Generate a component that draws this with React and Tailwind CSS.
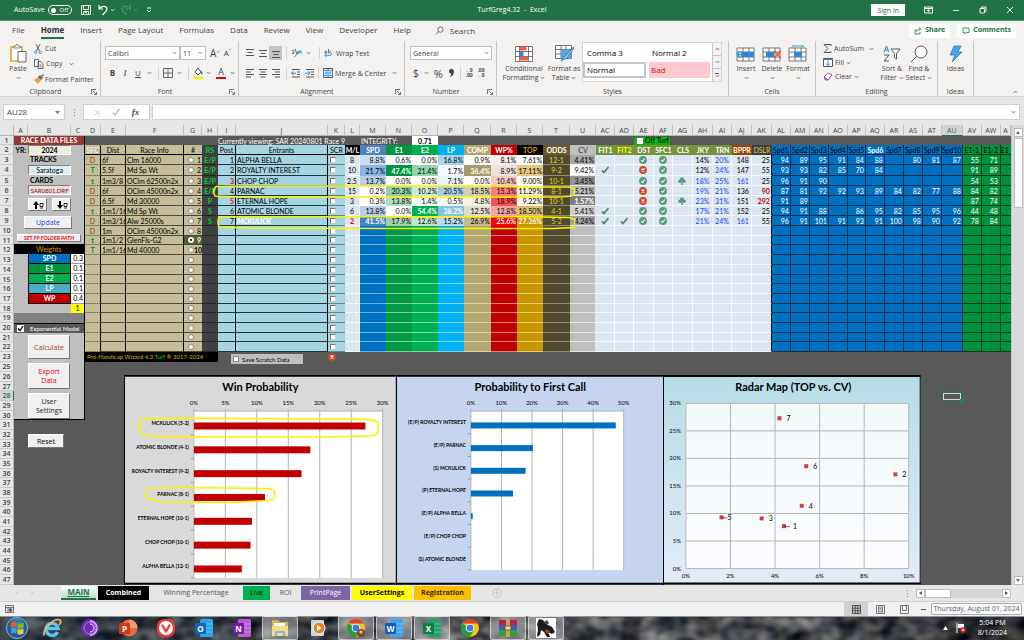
import { useState } from 'react';
import { clsx } from 'clsx';

const MENU = ['File', 'Home', 'Insert', 'Page Layout', 'Formulas', 'Data', 'Review', 'View', 'Developer', 'Help'];

// letter, width, title, header style, empty cell style
const GREEN_HEAD = 'bg-[#76933c] text-white font-bold text-center';
const PALE = 'bg-[#dce6f1] border-b border-r border-[#f6f9fc]';
const BLUE = 'bg-[#0070c0] border-b border-r border-[#0b2c48]';
const GREEN = 'bg-[#00923f] border-b border-r border-[#0a3a1c]';
const BLUE_HEAD = 'bg-[#0070c0] text-black text-center border-r border-b border-[#0b2c48]';

const COLUMNS = [
  { id: 'D', w: 16, title: 'SFC', head: 'bg-[#c4bd97] text-[#eeece1] font-bold text-center border-r border-b border-black', body: 'bg-[#c4bd97] border-b border-b-[#8a8468] border-r border-r-black' },
  { id: 'E', w: 25, title: 'Dist', head: 'bg-[#c4bd97] text-center border-r border-b border-black', body: 'bg-[#c4bd97] border-b border-b-[#4d4a3a] border-r border-r-black' },
  { id: 'F', w: 58, title: 'Race Info', head: 'bg-[#c4bd97] text-center border-r border-b border-black', body: 'bg-[#c4bd97] border-b border-b-[#4d4a3a] border-r border-r-black' },
  { id: 'G', w: 18, title: '#', head: 'bg-[#c4bd97] text-center border-b border-black', body: 'bg-[#c4bd97] border-b border-b-[#4d4a3a]' },
  { id: 'H', w: 16, title: 'RS', head: 'bg-[#404040] text-[#00d232] font-bold text-center', body: 'bg-[#404040] border-b border-[#262626]' },
  { id: 'I', w: 18, title: 'Post', head: 'bg-[#a5d5e2] text-center border-r border-b border-black', body: 'bg-[#a5d5e2] border-b border-b-[#1e3338] border-r border-r-black' },
  { id: 'J', w: 92, title: 'Entrants', head: 'bg-[#a5d5e2] text-center border-r border-b border-black', body: 'bg-[#a5d5e2] border-b border-b-[#1e3338] border-r border-r-black' },
  { id: 'K', w: 17, title: 'SCR', head: 'bg-[#a5d5e2] text-center border-b border-black', body: 'bg-[#a5d5e2] border-b border-b-[#5d8791]' },
  { id: 'L', w: 15, title: 'M/L', head: 'bg-black text-white font-bold text-center', body: PALE },
  { id: 'M', w: 26, title: 'SPD', head: 'bg-[#4f81bd] text-white font-bold text-center', body: 'bg-[#0070c0] border-b border-[#6fb0e0]' },
  { id: 'N', w: 26, title: 'E1', head: 'bg-[#00963f] text-white font-bold text-center', body: 'bg-[#009a46] border-b border-[#7fcb9f]' },
  { id: 'O', w: 26, title: 'E2', head: 'bg-[#00b050] text-white font-bold text-center', body: 'bg-[#00b050] border-b border-[#80d7a7]' },
  { id: 'P', w: 26, title: 'LP', head: 'bg-[#00b0f0] text-white font-bold text-center', body: 'bg-[#00b0f0] border-b border-[#80d7f7]' },
  { id: 'Q', w: 27, title: 'COMP', head: 'bg-[#b2a46c] text-white font-bold text-center', body: 'bg-[#b5a970] border-b border-[#d8d2b6]' },
  { id: 'R', w: 26, title: 'WP%', head: 'bg-[#c00000] text-white font-bold text-center', body: 'bg-[#c00000] border-b border-[#df8080]' },
  { id: 'S', w: 26, title: 'TOP', head: 'bg-black text-[#d99e12] font-bold text-center', body: 'bg-[#c89800] border-b border-[#e3cb80]' },
  { id: 'T', w: 27, title: 'ODDS', head: 'bg-[#6b5a2b] text-white font-bold text-center', body: 'bg-[#4f4a2e] border-b border-[#8d8a74]' },
  { id: 'U', w: 26, title: 'CV', head: 'bg-[#bfbfbf] text-[#333] text-center', body: 'bg-[#bfbfbf] border-b border-r border-[#e6e6e6]' },
  { id: 'AC', w: 19, title: 'FIT1', head: GREEN_HEAD, body: PALE },
  { id: 'AD', w: 19, title: 'FIT2', head: 'bg-[#76933c] text-[#ffff00] font-bold text-center', body: PALE },
  { id: 'AE', w: 20, title: 'DST', head: GREEN_HEAD, body: PALE },
  { id: 'AF', w: 19, title: 'SFC1', head: GREEN_HEAD, body: PALE },
  { id: 'AG', w: 20, title: 'CLS', head: GREEN_HEAD, body: PALE },
  { id: 'AH', w: 20, title: 'JKY', head: GREEN_HEAD, body: PALE },
  { id: 'AI', w: 19, title: 'TRN', head: GREEN_HEAD, body: PALE },
  { id: 'AJ', w: 20, title: 'BPPR', head: 'bg-[#974706] text-white font-bold text-center', body: PALE },
  { id: 'AK', w: 20, title: 'DSLR', head: 'bg-[#404040] text-[#d8cf3a] text-center', body: 'bg-[#dce6f1] border-b border-b-[#f6f9fc] border-r border-r-black' },
  { id: 'AL', w: 19, title: 'Spd1', head: BLUE_HEAD, body: BLUE },
  { id: 'AM', w: 19, title: 'Spd2', head: BLUE_HEAD, body: BLUE },
  { id: 'AN', w: 19, title: 'Spd3', head: BLUE_HEAD, body: BLUE },
  { id: 'AO', w: 19, title: 'Spd4', head: BLUE_HEAD, body: BLUE },
  { id: 'AP', w: 18, title: 'Spd5', head: BLUE_HEAD, body: BLUE },
  { id: 'AQ', w: 19, title: 'Spd6', head: 'bg-[#0070c0] text-white font-bold text-center border-b border-[#0b2c48]', body: BLUE },
  { id: 'AR', w: 19, title: 'Spd7', head: BLUE_HEAD, body: BLUE },
  { id: 'AS', w: 19, title: 'Spd8', head: BLUE_HEAD, body: BLUE },
  { id: 'AT', w: 19, title: 'Spd9', head: BLUE_HEAD, body: BLUE },
  { id: 'AU', w: 21, title: 'Spd10', head: BLUE_HEAD, body: BLUE },
  { id: 'AV', w: 19, title: 'E1-1', head: 'bg-[#00923f] text-black text-center border-r border-b border-[#0a3a1c]', body: GREEN },
  { id: 'AW', w: 19, title: 'E1-2', head: 'bg-[#00923f] text-black text-center border-r border-b border-[#0a3a1c]', body: GREEN },
  { id: 'AX', w: 10, title: 'E1', head: 'bg-[#00923f] text-black border-b border-[#0a3a1c]', body: 'bg-[#00923f] border-b border-[#0a3a1c]' },
];

const RACES = [
  ['D', '6f', 'Clm 16000'],
  ['T', '5.5f', 'Md Sp Wt'],
  ['t', '1m3/8', 'OClm 62500n2x'],
  ['D', '6f', 'OClm 45000n2x'],
  ['D', '6.5f', 'Md 30000'],
  ['t', '1m1/16', 'Md Sp Wt'],
  ['D', '1m3/16', 'Alw 25000s'],
  ['D', '1m', 'OClm 45000n2x'],
  ['t', '1m1/2', 'GlenFls-G2'],
  ['T', '1m1/16', 'Md 40000'],
];

const STRONG = 'text-white font-bold';

const HORSES = [
  {
    style: 'E/P', name: 'ALPHA BELLA', ml: '8', odds: '12-1',
    heat: [['8.8%', 'bg-[#d0def2]'], ['0.6%', 'bg-white'], ['0.0%', 'bg-white'], ['16.8%', 'bg-[#a8d5ea]'], ['0.9%', 'bg-[#fbfaf7]'], ['8.1%', 'bg-[#f3ecea]'], ['7.61%', 'bg-white']],
    cv: ['4.41%', 'bg-[#a6a6a6]'], fit: [0, 0], dst: 1, cls: 0, jky: '14%', trn: '20%', bppr: '148', dslr: '25',
    spd: [94, 89, 95, 91, 84, 88, '', 80, 81, 87], e1: [55, 71],
  },
  {
    style: 'E/P', name: 'ROYALTY INTEREST', ml: '10', odds: '9-2',
    heat: [['21.7%', 'bg-[#8db4e2]'], ['47.4%', `bg-[#009640] ${STRONG}`], ['21.4%', 'bg-[#93d5b0]'], ['1.7%', 'bg-[#f4fafd]'], ['36.4%', `bg-[#a89b6b] ${STRONG}`], ['8.9%', 'bg-[#f0dfdc]'], ['17.11%', 'bg-[#e3c983]']],
    cv: ['9.42%', 'bg-white'], fit: [1, 0], dst: 0, cls: 0, jky: '12%', trn: '24%', bppr: '147', dslr: '55',
    spd: [93, 93, 82, 85, 70, 84, '', '', '', ''], e1: [91, 89],
  },
  {
    style: 'E/P', name: 'CHOP CHOP', ml: '2.5', odds: '10-1', hot: true,
    heat: [['13.7%', 'bg-[#b8cdeb]'], ['0.0%', 'bg-white'], ['0.0%', 'bg-white'], ['7.1%', 'bg-[#e8f3fb]'], ['0.0%', 'bg-white'], ['10.4%', 'bg-[#f7c7c4]'], ['9.00%', 'bg-[#fdfaf0]']],
    cv: ['3.45%', 'bg-[#949494]'], fit: [0, 0], dst: 1, cls: 1, jky: '18%', trn: '25%', bppr: '161', dslr: '25',
    spd: [96, 91, 90, '', '', '', '', '', '', ''], e1: [54, 53],
  },
  {
    style: 'E/P', name: 'PARNAC', ml: '15', odds: '8-1',
    heat: [['0.2%', 'bg-white'], ['20.3%', 'bg-[#8fd0a9]'], ['10.2%', 'bg-[#c8ebd8]'], ['20.5%', 'bg-[#a9cfe6]'], ['18.5%', 'bg-[#d5cdb4]'], ['15.3%', 'bg-[#fa7d7a]'], ['11.29%', 'bg-[#f8efd8]']],
    cv: ['5.21%', 'bg-[#b8b8b8]'], fit: [0, 0], dst: 0, cls: 0, jky: '19%', trn: '21%', bppr: '136', dslr: '90',
    spd: [87, 81, 92, 92, 93, 89, 84, 82, 77, 88], e1: [84, 82],
  },
  {
    style: 'P', name: 'ETERNAL HOPE', ml: '3', odds: '10-1', hot: true,
    heat: [['0.3%', 'bg-white'], ['13.8%', 'bg-[#b0dec3]'], ['1.4%', 'bg-[#f6fcf9]'], ['0.5%', 'bg-white'], ['4.8%', 'bg-[#f3f1e9]'], ['18.9%', 'bg-[#f55550]'], ['9.22%', 'bg-[#fcf8ec]']],
    cv: ['1.57%', `bg-[#7f7f7f] ${STRONG}`], fit: [0, 0], dst: 0, cls: 1, jky: '23%', trn: '31%', bppr: '151', dslr: '292',
    spd: [91, 89, '', '', '', '', '', '', '', ''], e1: [87, 74],
  },
  {
    style: 'S', name: 'ATOMIC BLONDE', ml: '6', odds: '4-1',
    heat: [['13.8%', 'bg-[#b8cdeb]'], ['0.0%', 'bg-white'], ['54.4%', `bg-[#00b050] ${STRONG}`], ['38.2%', `bg-[#82c4e2] ${STRONG}`], ['12.5%', 'bg-[#e2ddc9]'], ['12.8%', 'bg-[#f9a6a3]'], ['18.50%', 'bg-[#ddbd6c]']],
    cv: ['5.41%', 'bg-[#cfcfcf]'], fit: [1, 0], dst: 1, cls: 0, jky: '17%', trn: '21%', bppr: '152', dslr: '25',
    spd: [94, 91, 88, '', 86, 95, 82, 85, 95, 96], e1: [44, 48],
  },
  {
    style: 'S', name: 'MCKULICK', ml: '2', odds: '5-2', top: true,
    heat: [['41.5%', `bg-[#4583c9] ${STRONG}`], ['17.9%', 'bg-[#9dd5b3]'], ['12.6%', 'bg-[#bde8cf]'], ['15.2%', 'bg-[#b8d9ec]'], ['26.9%', 'bg-[#c3b98f]'], ['25.6%', `bg-[#ff0000] ${STRONG}`], ['27.26%', `bg-[#c99a00] ${STRONG}`]],
    cv: ['4.24%', 'bg-[#a3a3a3]'], fit: [1, 1], dst: 1, cls: 0, jky: '21%', trn: '24%', bppr: '161', dslr: '55',
    spd: [96, 91, 101, 91, 93, 91, 100, 98, 90, 92], e1: [78, 84],
  },
];

const WEIGHTS = [
  ['SPD', '0.3', 'bg-[#0070c0]'],
  ['E1', '0.1', 'bg-[#00963f]'],
  ['E2', '0.1', 'bg-[#00b050]'],
  ['LP', '0.1', 'bg-[#4bacc6]'],
  ['WP', '0.4', 'bg-[#c00000]'],
];

const WIN = [
  ['MCKULICK (5-2)', 27.26],
  ['ATOMIC BLONDE (4-1)', 18.5],
  ['ROYALTY INTEREST (9-2)', 17.11],
  ['PARNAC (8-1)', 11.29],
  ['ETERNAL HOPE (10-1)', 9.22],
  ['CHOP CHOP (10-1)', 9.0],
  ['ALPHA BELLA (12-1)', 7.61],
];

const FIRST_CALL = [
  ['(E/P) ROYALTY INTEREST', 47.4],
  ['(E/P) PARNAC', 20.3],
  ['(S) MCKULICK', 17.9],
  ['(P) ETERNAL HOPE', 13.8],
  ['(E/P) ALPHA BELLA', 0.6],
  ['(E/P) CHOP CHOP', 0],
  ['(S) ATOMIC BLONDE', 0],
];

const RADAR = [
  [7, 4.2, 27.3], [6, 5.4, 18.6], [2, 9.4, 17.1], [4, 5.2, 11.4], [5, 1.6, 9.3], [3, 3.4, 9.1], [1, 4.4, 7.7],
];

function rowHeight(n) {
  if (n === 4) return 'h-[11px]';
  return n === 1 || n === 11 || (n > 12 && n % 3 === 0) ? 'h-[9px]' : 'h-[10px]';
}

function Chevron({ className = '' }) {
  return (
    <svg viewBox="0 0 6 4" className={clsx('w-[5px] h-1 shrink-0', className)} fill="none" stroke="#555" strokeWidth="1">
      <path d="M1 1l2 2 2-2" />
    </svg>
  );
}

function Sep() {
  return <span className="w-px h-3 bg-[#d2d0ce] shrink-0" />;
}

function TitleBar() {
  return (
    <header className="h-[21px] bg-[#217346] border-b border-[#4d9069] grid grid-cols-[1fr_auto_1fr] items-center text-white text-[7px]">
      <div className="flex items-center pl-[14px]">
        <span>AutoSave</span>
        <button aria-label="AutoSave off" className="ml-[3px] w-6 h-[10px] rounded-full border border-white flex items-center gap-1 px-[2px] text-[6px] leading-none">
          <span className="w-[5px] h-[5px] rounded-full bg-white" />
          Off
        </button>
        <button aria-label="Save" className="ml-2">
          <svg viewBox="0 0 12 12" className="w-3 h-3" fill="none" stroke="#fff" strokeWidth=".9">
            <path d="M1.500 1.500h9v9h-9zM3.500 1.500v4h5v-4M3.500 10.500v-3h5v3M5 8.500h2" />
          </svg>
        </button>
        <button aria-label="Undo" className="ml-[5px] flex items-center gap-px">
          <svg viewBox="0 0 12 12" className="w-3 h-3" fill="none" stroke="#fff" strokeWidth="1.200">
            <path d="M2 1v4h4M2 5c2-3 8-4 8 0 0 2-3 4-4.500 6" />
          </svg>
          <svg viewBox="0 0 6 4" className="w-[5px] h-1" fill="none" stroke="#fff"><path d="M1 1l2 2 2-2" /></svg>
        </button>
        <button aria-label="Redo" className="ml-[5px] flex items-center gap-px opacity-30">
          <svg viewBox="0 0 12 12" className="w-3 h-3" fill="none" stroke="#fff" strokeWidth="1.200" strokeDasharray="2 1">
            <path d="M10 1v4H6M10 5C8 2 2 1 2 5c0 2 3 4 4.500 6" />
          </svg>
          <svg viewBox="0 0 6 4" className="w-[5px] h-1" fill="none" stroke="#fff"><path d="M1 1l2 2 2-2" /></svg>
        </button>
        <button aria-label="Customize toolbar" className="ml-2">
          <svg viewBox="0 0 6 6" className="w-[6px] h-[6px]" fill="none" stroke="#fff"><path d="M1 1h4M1 3l2 2 2-2" /></svg>
        </button>
      </div>
      <h1 className="whitespace-pre">TurfGreg4.32  -  Excel</h1>
      <div className="flex items-center justify-end pr-[10px] gap-[19px]">
        <button className="bg-white text-[#217346] h-3 px-[6px] leading-none">Sign in</button>
        <button aria-label="Ribbon options">
          <svg viewBox="0 0 9 8" className="w-[9px] h-2" fill="none" stroke="#fff"><path d="M.5 1h8v6h-8zM.5 2.500h8M4.500 6V3.500M3 5l1.500-1.500L6 5" /></svg>
        </button>
        <button aria-label="Minimize"><svg viewBox="0 0 8 8" className="w-2 h-2" stroke="#fff" strokeWidth=".8"><path d="M1 4.500h6" /></svg></button>
        <button aria-label="Restore"><svg viewBox="0 0 8 8" className="w-2 h-2" fill="none" stroke="#fff" strokeWidth=".9"><path d="M1 2.500h4.500V7H1zM2.500 2.500V1H7v4.500H5.500" /></svg></button>
        <button aria-label="Close"><svg viewBox="0 0 8 8" className="w-2 h-2" stroke="#fff" strokeWidth=".9"><path d="M1 1l6 6M7 1L1 7" /></svg></button>
      </div>
    </header>
  );
}

function MenuTabs() {
  return (
    <nav className="h-[19px] bg-[#f3f2f1] flex items-center pl-3 pr-2 text-[8px] text-[#444]">
      <div className="flex items-center gap-4">
        {MENU.map((m) => (
          <button
            key={m}
            className={clsx('h-4 leading-none border-b-2', m === 'Home' ? 'font-bold text-[#333] border-[#217346]' : 'border-transparent')}
          >
            {m}
          </button>
        ))}
      </div>
      <button className="ml-6 flex items-center gap-[6px]">
        <svg viewBox="0 0 10 10" className="w-[9px] h-[9px]" fill="none" stroke="#555" strokeWidth=".9"><circle cx="6" cy="4" r="3" /><path d="M4 6L1 9.500" /></svg>
        Search
      </button>
      <div className="ml-auto flex gap-[7px] text-[7px] text-[#217346] font-bold">
        <button className="bg-white h-[14px] px-[5px] flex items-center gap-[3px] rounded-[1px]">
          <svg viewBox="0 0 8 8" className="w-2 h-2" fill="none" stroke="#217346" strokeWidth=".8"><path d="M3 3H1v4h5V5M3 5c0-2 1-3 3-3M5 .5L7 2 5 3.500" /></svg>
          Share
        </button>
        <button className="bg-white h-[14px] px-[5px] flex items-center gap-[3px] rounded-[1px]">
          <svg viewBox="0 0 8 8" className="w-2 h-2" fill="none" stroke="#217346" strokeWidth=".8"><path d="M1 1h6v4.500H4L2.500 7V5.500H1z" /></svg>
          Comments
        </button>
      </div>
    </nav>
  );
}

function Group({ label, launcher, children, className }) {
  return (
    <section className={clsx('flex flex-col border-r border-[#c8c6c4] min-w-0', className)}>
      <div className="flex-1 flex min-h-0">{children}</div>
      <div className="h-[9px] flex items-center text-[#444] leading-none">
        <span className="flex-1 text-center">{label}</span>
        {launcher && (
          <svg viewBox="0 0 6 6" className="w-[6px] h-[6px] mr-[3px]" fill="none" stroke="#555" strokeWidth=".8"><path d="M.5 5V.5H5M2 2l3 3M5.500 3v2.500H3" /></svg>
        )}
      </div>
    </section>
  );
}

function Lines({ d, selected, label }) {
  return (
    <button aria-label={label} className={clsx('w-[13px] h-[14px] flex items-center justify-center', selected && 'bg-[#c5c3c1]')}>
      <svg viewBox="0 0 10 10" className="w-[10px] h-[10px]" fill="none" stroke="#555" strokeWidth="1"><path d={d} /></svg>
    </button>
  );
}

function BigButton({ lines, chevron = true, children, className }) {
  return (
    <button className={clsx('flex flex-col items-center leading-[9px] pt-[2px]', className)}>
      <span className="h-[21px] flex items-center">{children}</span>
      {lines.map((l, i) => (
        <span key={l} className="flex items-center gap-[2px] whitespace-nowrap">
          {l}
          {chevron && lines.length > 1 && i === lines.length - 1 && <Chevron />}
        </span>
      ))}
      {chevron && lines.length === 1 && <Chevron className="mt-[3px]" />}
    </button>
  );
}

function CellsIcon({ kind }) {
  return (
    <svg viewBox="0 0 20 18" className="w-5 h-[18px]" fill="none" stroke="#666" strokeWidth=".9">
      <path d="M1 3h17v13H1zM1 7h17M1 12h17M7 3v13M13 3v13" fill="#fff" />
      {kind === 'Insert' && <><path d="M5 7h13v5H5z" fill="#2b88d8" stroke="none" /><path d="M8 9.500H1M4 6.500l-3 3 3 3" stroke="#2b9be0" strokeWidth="1.400" /></>}
      {kind === 'Delete' && <><path d="M4 7h8v5H4z" fill="#2b88d8" stroke="none" /><path d="M12 6l7 7M19 6l-7 7" stroke="#e8503a" strokeWidth="1.400" /></>}
      {kind === 'Format' && <><path d="M6 7h8v5H6z" fill="#2b88d8" stroke="none" /><path d="M5 1h10M5 0v2M15 0v2" stroke="#2b9be0" /></>}
    </svg>
  );
}

function Ribbon() {
  return (
    <div className="h-[57px] pt-px bg-[#f3f2f1] border-b border-[#d6d4d2] grid grid-cols-[101fr_138fr_166fr_92fr_232fr_87fr_122fr_36fr_50fr] text-[7px] text-[#444]">
      <Group label="Clipboard" launcher>
        <BigButton lines={['Paste']} className="w-[34px] pl-[2px]">
          <svg viewBox="0 0 18 20" className="w-[18px] h-5" fill="none">
            <path d="M2 3h11v14H2z" stroke="#e3a02c" strokeWidth="1.600" fill="#fff" />
            <path d="M5 4V2h1.500a1.500 1.500 0 013 0H11v2z" fill="#fff" stroke="#666" strokeWidth=".8" />
            <path d="M9 7.500h8V18H9z" fill="#fff" stroke="#666" />
          </svg>
        </BigButton>
        <div className="flex flex-col justify-around leading-none">
          <button className="flex items-center gap-[3px]">
            <svg viewBox="0 0 8 10" className="w-2 h-[10px]" fill="none" strokeWidth=".9"><path d="M2 0l3.500 7M6 0L2.500 7" stroke="#555" /><circle cx="1.700" cy="8.300" r="1.200" stroke="#2b88d8" /><circle cx="6.300" cy="8.300" r="1.200" stroke="#2b88d8" /></svg>
            Cut
          </button>
          <button className="flex items-center gap-[2px]">
            <svg viewBox="0 0 10 10" className="w-[10px] h-[10px]" stroke="#555" strokeWidth=".9" fill="#fff"><path d="M.5 .5h4v7h-4zM4 2.500h3l2 2v5H4zM5.500 6h2M5.500 7.800h2" /></svg>
            Copy <Chevron className="ml-[5px]" />
          </button>
          <button className="flex items-center gap-px whitespace-nowrap">
            <svg viewBox="0 0 10 10" className="w-[10px] h-[10px]"><path d="M0 6l4-3 3 3-3 4z" fill="#e9a13b" /><path d="M4 3l2-2 3 3-2 2zM7 2l2-2 1 1-2 2z" fill="#666" /></svg>
            Format Painter
          </button>
        </div>
      </Group>

      <Group label="Font" launcher>
        <div className="flex flex-col pl-1 pt-[5px] gap-[6px] leading-none">
          <div className="flex items-center">
            <select aria-label="Font" className="appearance-none w-[75px] h-[14px] border border-[#c0bebc] bg-white pl-[2px]"><option>Calibri</option></select>
            <Chevron className="-ml-2 mr-[3px]" />
            <select aria-label="Font size" className="appearance-none w-[26px] h-[14px] border border-[#c0bebc] bg-white pl-[2px]"><option>11</option></select>
            <Chevron className="-ml-2 mr-[3px]" />
            <button className="ml-1 text-[10px]">A<sup className="text-[#2b88d8] text-[6px]">^</sup></button>
            <button className="ml-1 text-[8px]">A<sup className="text-[#2b88d8] text-[6px]">ˇ</sup></button>
          </div>
          <div className="flex items-center h-[14px] pl-[3px]">
            <button className="w-[9px] font-bold text-[8px]">B</button>
            <button className="w-2 ml-1 italic font-['Liberation_Serif',serif] text-[9px]">I</button>
            <button className="w-2 ml-[5px] underline text-[8px]">U</button>
            <Chevron className="ml-[5px] mr-[6px]" />
            <Sep />
            <svg viewBox="0 0 10 10" className="w-[10px] h-[10px] ml-[4px] mr-[4px]" fill="none" stroke="#555" strokeWidth=".9"><path d="M.5 .5h9v9h-9zM5 .5v9M.5 5h9" /></svg>
            <Chevron className="mr-[6px]" />
            <Sep />
            <svg viewBox="0 0 10 12" className="w-[10px] h-3 ml-[4px] mr-[3px]"><path d="M2 5l3-4 3 4-3 3z" fill="#fff" stroke="#555" /><path d="M8.500 4.500q1.500 2 0 3z" fill="#2b88d8" stroke="#2b88d8" /><path d="M0 9.500h10V12H0z" fill="#fff200" /></svg>
            <Chevron className="mr-[5px]" />
            <button className="w-[10px] text-[9px] leading-[10px] border-b-2 border-red-600">A</button>
            <Chevron className="ml-1" />
          </div>
        </div>
      </Group>

      <Group label="Alignment" launcher>
        <div className="flex flex-col pl-[4px] pt-[5px] gap-[6px] leading-none">
          <div className="flex items-center h-[14px]">
            <Lines label="Top align" d="M1 1.500h8M2.500 4.500h5M1 7.500h8" />
            <Lines label="Middle align" d="M1 2.500h8M2.500 5.500h5M1 8.500h8" />
            <Lines label="Bottom align" selected d="M1 3.500h8M2.500 6.500h5M1 9.500h8" />
            <span className="w-1" /><Sep />
            <svg viewBox="0 0 11 10" className="w-[11px] h-[10px] ml-1 mr-1" fill="none" strokeWidth=".9"><path d="M1 3q2-2 2 1t-2 1M4 1l2 5M6 4q2-1 1 2" stroke="#555" /><path d="M3 9l7-6M10 6V3H7" stroke="#2b88d8" /></svg>
            <Chevron className="mr-[8px]" /><Sep />
            <button className="ml-[4px] flex items-center gap-[3px] whitespace-nowrap">
              <svg viewBox="0 0 10 10" className="w-[9px] h-[9px]" fill="none"><path d="M1 3.500q0-2 2-1v2H1zM5 0v4.500q3 0 1.500-3" stroke="#555" strokeWidth=".9" /><path d="M1 7h6.500q2-1 0-3M3 5L1 7l2 2" stroke="#2b88d8" /></svg>
              Wrap Text
            </button>
          </div>
          <div className="flex items-center h-[14px]">
            <Lines label="Align left" d="M1 1.500h8M1 4h5M1 6.500h8M1 9h5" />
            <Lines label="Center" d="M1 1.500h8M2.500 4h5M1 6.500h8M2.500 9h5" />
            <Lines label="Align right" d="M1 1.500h8M4 4h5M1 6.500h8M4 9h5" />
            <span className="w-1" /><Sep />
            <svg viewBox="0 0 10 10" className="w-[10px] h-[10px] ml-1 mr-1" fill="none"><path d="M1 1.500h8M6 4h3M6 6.500h3M1 9h8" stroke="#555" /><path d="M5 5.200H.5M2.500 3.500l-2 1.700 2 1.700" stroke="#2b88d8" /></svg>
            <svg viewBox="0 0 10 10" className="w-[10px] h-[10px] mr-[3px]" fill="none"><path d="M1 1.500h8M6 4h3M6 6.500h3M1 9h8" stroke="#555" /><path d="M0 5.200h4.500M3 3.500l2 1.700-2 1.700" stroke="#2b88d8" /></svg>
            <Sep />
            <button className="ml-[4px] flex items-center gap-[2px] whitespace-nowrap">
              <svg viewBox="0 0 10 10" className="w-[10px] h-[10px]" fill="none"><path d="M.5 .5h9v9h-9zM5 .5v2M5 7.500v2" stroke="#555" /><path d="M.5 2.500h9v5h-9z" fill="#bfdff5" stroke="#2b88d8" strokeWidth=".8" /><path d="M2 5h6" stroke="#2b88d8" /></svg>
              Merge &amp; Center <Chevron className="ml-[4px]" />
            </button>
          </div>
        </div>
      </Group>

      <Group label="Number" launcher>
        <div className="flex flex-col pl-[5px] pt-[5px] gap-[6px] leading-none">
          <div className="flex items-center">
            <select aria-label="Number format" className="appearance-none w-[82px] h-[14px] border border-[#c0bebc] bg-white pl-[2px]"><option>General</option></select>
            <Chevron className="-ml-2" />
          </div>
          <div className="flex items-center h-[14px] pl-[3px]">
            <button className="text-[10px]">$</button>
            <Chevron className="ml-[5px] mr-[5px]" />
            <button className="text-[11px]">%</button>
            <button aria-label="Comma style" className="ml-[6px] mr-[6px]">
              <svg viewBox="0 0 5 9" className="w-[5px] h-[9px]"><path d="M2.500 0a2.300 2.300 0 00-.3 4.600Q2 7 .5 8 5 7 4.900 2.500A2.400 2.400 0 002.500 0z" fill="#444" /></svg>
            </button>
            <Sep />
            <button aria-label="Increase decimal" className="ml-1 flex flex-col items-end leading-[5px] text-[5px] font-bold"><span><span className="text-[#2b88d8]">←</span>0</span><span>.00</span></button>
            <button aria-label="Decrease decimal" className="ml-1 flex flex-col items-end leading-[5px] text-[5px] font-bold"><span>.00</span><span><span className="text-[#2b88d8]">→</span>0</span></button>
          </div>
        </div>
      </Group>

      <Group label="Styles">
        <BigButton lines={['Conditional', 'Formatting']} className="w-[49px] pl-[5px]">
          <svg viewBox="0 0 18 16" className="w-[18px] h-4" fill="#fff" stroke="#555" strokeWidth=".8">
            <path d="M.5 .5h17v15H.5zM.5 5.500h17M.5 10.500h17M4.500 .5v15M13.500 .5v15" />
            <path d="M4.500 .5h7v4h-7zM4.500 10.500h9v4h-9z" fill="#e8604c" stroke="none" /><path d="M4.500 6h4v4h-4z" fill="#2b88d8" stroke="none" />
          </svg>
        </BigButton>
        <BigButton lines={['Format as', 'Table']} className="w-[36px]">
          <svg viewBox="0 0 19 17" className="w-[19px] h-[17px]" fill="#fff" stroke="#555" strokeWidth=".8">
            <path d="M.5 .5h16v13H.5zM.5 4.500h16M.5 9h16M6 .5v13M11 .5v13" />
            <path d="M6 4.500h10.500v9H6z" fill="#5aa7e0" stroke="none" /><path d="M18.500 2L10 11l-4 5 6-3 6.500-9z" fill="#8cc4ec" stroke="#2b6fa8" />
          </svg>
        </BigButton>
        <div className="flex my-px h-10 border border-[#d8d6d4] bg-white text-black text-[8px] flex-1 mr-[6px]">
          <div className="flex-1 grid grid-cols-2 gap-x-[3px] grid-rows-[19px_16px]">
            <button className="text-left pl-1">Comma 3</button>
            <button className="text-left pl-[3px]">Normal 2</button>
            <button className="text-left pl-[2px] border-2 border-[#c3c5c4]">Normal</button>
            <button className="text-left pl-[2px] bg-[#ffc7ce] text-[#c0202a] mr-[2px]">Bad</button>
          </div>
          <div className="w-[9px] flex flex-col divide-y divide-[#c8c6c4] border-l border-[#c8c6c4] bg-[#f3f2f1]">
            <button aria-label="Up" className="flex-1 flex items-center justify-center"><Chevron className="rotate-180" /></button>
            <button aria-label="Down" className="flex-1 flex items-center justify-center"><Chevron /></button>
            <button aria-label="More" className="flex-1 flex flex-col items-center justify-center"><span className="w-1 h-px bg-[#555]" /><Chevron /></button>
          </div>
        </div>
      </Group>

      <Group label="Cells">
        <div className="flex-1 flex justify-around px-1">
          {['Insert', 'Delete', 'Format'].map((k) => (
            <BigButton key={k} lines={[k]} className="w-[26px]"><CellsIcon kind={k} /></BigButton>
          ))}
        </div>
      </Group>

      <Group label="Editing">
        <div className="flex flex-col gap-[5px] pt-[3px] pl-[7px] w-[63px] leading-none">
          <button className="flex items-center gap-[2px] h-[9px] whitespace-nowrap">
            <svg viewBox="0 0 9 9" className="w-[9px] h-[9px]" fill="none" stroke="#555"><path d="M8 2V.5H1L5 4.500 1 8.500h7V7" /></svg>
            AutoSum <Chevron className="ml-[3px]" />
          </button>
          <button className="flex items-center gap-[2px] h-[9px]">
            <svg viewBox="0 0 10 9" className="w-[10px] h-[9px]" fill="#fff" stroke="#555"><path d="M.5 .5h9v8h-9z" /><path d="M.5 1.500h9M5 2.500v5M3 5.500l2 2 2-2" stroke="#2b88d8" /></svg>
            Fill <Chevron />
          </button>
          <button className="flex items-center gap-[2px] h-[9px]">
            <svg viewBox="0 0 10 9" className="w-[10px] h-[9px]"><path d="M1 5l4-4 4 2-4 5z" fill="#fff" stroke="#9b4fb0" /><path d="M1 5l4 3-1 1-3-2z" fill="#9b4fb0" /></svg>
            Clear <Chevron />
          </button>
        </div>
        <BigButton lines={['Sort &', 'Filter']} className="w-[26px]">
          <svg viewBox="0 0 18 17" className="w-[18px] h-[17px]" fill="none"><path d="M1 7l2.500-6L6 7M2 5h3" stroke="#2b88d8" /><path d="M1 10h5l-5 6h5" stroke="#555" /><path d="M8 4h9l-3.500 4.500V14l-2-1.500v-4z" stroke="#555" fill="#fff" /></svg>
        </BigButton>
        <BigButton lines={['Find &', 'Select']} className="w-[28px]">
          <svg viewBox="0 0 18 18" className="w-[18px] h-[18px]" fill="none" stroke="#555"><circle cx="11" cy="7" r="6" fill="#fff" /><path d="M6.500 11.500L1 17" /></svg>
        </BigButton>
      </Group>

      <Group label="Ideas">
        <BigButton lines={['Ideas']} chevron={false} className="w-full">
          <svg viewBox="0 0 14 18" className="w-[14px] h-[18px]"><path d="M5 1h7L9 7h4L3 17l3-7H1z" fill="#4aa3e8" stroke="#1f6fb5" strokeWidth=".7" /></svg>
        </BigButton>
      </Group>

      <div className="flex items-end justify-end pr-[6px] pb-[2px]">
        <button aria-label="Collapse ribbon"><Chevron className="rotate-180" /></button>
      </div>
    </div>
  );
}

function FormulaBar() {
  return (
    <div className="h-7 bg-[#e6e6e6] flex items-start pt-[7px] pl-[3px] pr-1 text-[8px] text-[#444]">
      <div className="w-[62px] h-4 bg-white border border-[#d0d0d0] flex items-center pr-1">
        <input aria-label="Name box" defaultValue="AU28" className="w-full min-w-0 pl-[3px] outline-none" />
        <svg viewBox="0 0 5 3" className="w-[5px] h-[3px] shrink-0"><path d="M0 0h5L2.500 3z" fill="#777" /></svg>
      </div>
      <span className="w-[18px] h-4 flex flex-col items-center justify-center gap-[2px]">
        <span className="w-px h-px bg-[#888]" /><span className="w-px h-px bg-[#888]" /><span className="w-px h-px bg-[#888]" />
      </span>
      <div className="w-[67px] h-4 bg-white border border-[#d0d0d0] flex items-center justify-around px-1">
        <svg viewBox="0 0 8 8" className="w-[7px] h-[7px]" stroke="#bbb"><path d="M1 1l6 6M7 1L1 7" /></svg>
        <svg viewBox="0 0 8 8" className="w-2 h-2" fill="none" stroke="#bbb" strokeWidth="1.300"><path d="M1 4.500L3 7l4.500-6" /></svg>
        <button className="italic font-bold font-['Liberation_Serif',serif] text-[9px] leading-none">fx</button>
      </div>
      <div className="ml-[2px] flex-1 h-4 bg-white border border-[#d0d0d0] flex items-center pr-[3px]">
        <input aria-label="Formula" className="flex-1 min-w-0 outline-none" />
        <Chevron />
      </div>
    </div>
  );
}

function RowNumbers() {
  const rows = Array.from({ length: 47 }, (_, i) => i + 1).filter((n) => n !== 24);
  return (
    <div className="w-[14px] shrink-0 bg-[#e6e6e6] text-[#444] text-[7px] font-semibold text-center">
      <div className="h-[11px] border-b border-r border-[#b5b5b5]" />
      {rows.map((n) => (
        <div key={n} className={clsx('border-b border-[#c9c9c9] leading-[9px] border-r', rowHeight(n), n === 28 ? 'bg-[#d2d2d2] text-[#217346] border-r-[#217346]' : 'border-r-[#b5b5b5]')}>
          {n}
        </div>
      ))}
    </div>
  );
}

const BEVEL = 'bg-[#f0f0f0] border border-t-white border-l-white border-r-[#777] border-b-[#777]';
const SUNK = 'w-[43px] h-[10px] border border-t-[#808080] border-l-[#808080] border-r-white border-b-white text-center leading-none outline-none';

function SidePanel() {
  const [exponential, setExponential] = useState(true);
  return (
    <aside className="w-[71px] shrink-0 font-['Lato',sans-serif] text-[7px] leading-none">
      <div className="h-[11px] bg-[#e6e6e6] border-b border-[#b5b5b5] grid grid-cols-[14px_43px_14px] text-center text-[#444] font-['Open_Sans',sans-serif] leading-[11px]">
        <span className="border-r border-[#c0c0c0]">A</span><span className="border-r border-[#c0c0c0]">B</span><span>C</span>
      </div>
      <div className="bg-[#bfbfbf] h-[284px] border-r border-b border-black flex flex-col">
        <h2 className="h-[9px] leading-[9px] bg-[#963634] text-white font-bold text-center">RACE DATA FILES</h2>
        <div className="flex items-center h-[11px]">
          <label htmlFor="yr" className="w-[14px] text-center font-bold">YR:</label>
          <input id="yr" defaultValue="2024" className={clsx(SUNK, 'bg-[#eeece1] font-bold')} />
        </div>
        <label htmlFor="track" className="h-[10px] pl-4 pt-px font-bold">TRACKS</label>
        <input id="track" defaultValue="Saratoga" className={clsx(SUNK, 'bg-[#daeef3] ml-[14px]')} />
        <label htmlFor="card" className="h-[11px] pl-4 pt-[2px] font-bold">CARDS</label>
        <input id="card" defaultValue="SAR0801.DRF" className={clsx(SUNK, 'bg-[#f2dcdb] text-[#632523] text-[6px] ml-[14px]')} />
        <div className="flex gap-[5px] pl-[14px] pt-[3px]">
          <button aria-label="Previous card" className={clsx(BEVEL, 'w-[19px] h-[13px] flex items-center justify-center')}>
            <svg viewBox="0 0 12 8" className="w-3 h-2"><path d="M4 0l3 4H5v4H3V4H1z" /><path d="M8 2.500h3v3H8zM8 7h3" fill="none" stroke="#000" strokeWidth=".8" /></svg>
          </button>
          <button aria-label="Next card" className={clsx(BEVEL, 'w-[19px] h-[13px] flex items-center justify-center')}>
            <svg viewBox="0 0 12 8" className="w-3 h-2"><path d="M4 8L1 4h2V0h2v4h2z" /><path d="M8 2.500h3v3H8zM8 7h3" fill="none" stroke="#000" strokeWidth=".8" /></svg>
          </button>
        </div>
        <button className={clsx(BEVEL, "ml-[10px] mt-[5px] w-12 h-[14px] text-blue-700 font-['Open_Sans',sans-serif]")}>Update</button>
        <button className={clsx(BEVEL, 'mx-[3px] mt-[5px] h-2 text-[5px] font-bold text-red-600 whitespace-nowrap')}>SET FP FOLDER PATH</button>
        <h3 className="mt-[2px] h-[10px] leading-[10px] bg-black text-[#c8a01e] text-center">Weights</h3>
        {WEIGHTS.map(([name, value, tone]) => (
          <div key={name} className="grid grid-cols-[14px_43px_13px] h-[10px] text-center leading-[9px]">
            <span />
            <label htmlFor={`w-${name}`} className={clsx('text-white font-bold border border-t-0 border-black', tone)}>{name}</label>
            <input id={`w-${name}`} defaultValue={value} className="w-full min-w-0 bg-white border-b border-[#999] text-right pr-px outline-none" />
          </div>
        ))}
        <div className="ml-[57px] h-[9px] shrink-0 bg-[#ffff00] text-center leading-[9px]">1</div>
        <div className="h-[10px] bg-[#808080] shrink-0" />
        <label className="h-[10px] shrink-0 bg-[#595959] border-t border-black text-white text-[6px] flex items-center pl-[3px] whitespace-nowrap">
          <input type="checkbox" checked={exponential} onChange={() => setExponential(!exponential)} className="appearance-none w-[7px] h-[7px] bg-white peer" />
          <svg viewBox="0 0 7 7" className="w-[7px] h-[7px] -ml-[7px] mr-[6px] opacity-0 peer-checked:opacity-100 shrink-0" fill="none" stroke="#000" strokeWidth="1.300"><path d="M1 3.500l2 2L6 1" /></svg>
          Exponential Model
        </label>
        <div className="flex flex-col gap-1 px-[14px] pt-[2px] font-['Open_Sans',sans-serif] leading-[9px]">
          <button className={clsx(BEVEL, 'h-6 text-[#974706]')}>Calculate</button>
          <button className={clsx(BEVEL, 'h-[26px] text-red-600')}>Export<br />Data</button>
          <button className={clsx(BEVEL, 'h-[26px] text-[#222]')}>User<br />Settings</button>
        </div>
      </div>
      <button className={clsx(BEVEL, "ml-[14px] mt-[14px] w-9 h-[14px] font-['Open_Sans',sans-serif]")}>Reset</button>
    </aside>
  );
}

function Mark({ kind }) {
  if (kind === 'tick') {
    return <svg viewBox="0 0 8 8" className="w-2 h-2 mx-auto" fill="none" stroke="#4a8a68" strokeWidth="1.800"><path d="M1 4.500L3 6.500 7.500 1" /></svg>;
  }
  if (kind === 'club') {
    return <svg viewBox="0 0 8 8" className="w-2 h-2 mx-auto" fill="#5a9a7c"><circle cx="4" cy="2.200" r="2" /><circle cx="2" cy="4.200" r="1.800" /><circle cx="6" cy="4.200" r="1.800" /><path d="M3.300 4h1.400v4H3.300z" /></svg>;
  }
  const ok = kind === 'ok';
  return (
    <svg viewBox="0 0 8 8" className="w-2 h-2 mx-auto" fill="none">
      <circle cx="4" cy="4" r="3.900" fill={ok ? '#5a9a7c' : '#d0452c'} />
      <path d={ok ? 'M2.200 4l1.300 1.500 2.300-3' : 'M2.500 2.500l3 3M5.500 2.500l-3 3'} stroke="#fff" strokeWidth="1.100" />
    </svg>
  );
}

// content + extra classes of one cell, keyed by column
function cellFor(id, row, race, horse) {
  const isBlue = (v) => Number.parseInt(v, 10) >= 17;
  if (id === 'G') {
    return [
      <span className="flex items-center justify-between pl-1 pr-px h-2 overflow-hidden">
        <input type="radio" name="race" aria-label={`Race ${row - 2}`} defaultChecked={row === 11} className="appearance-none w-[6px] h-[6px] rounded-full bg-white border border-[#888] checked:border-2 checked:border-white checked:bg-black shrink-0" />
        {race ? row - 2 : ''}
      </span>,
      row === 11 ? 'bg-[#4f6228] text-white font-bold' : row === 12 ? 'font-bold' : '',
    ];
  }
  if (id === 'K') {
    return [<input type="checkbox" aria-label={`Scratch ${row - 2}`} className="appearance-none block w-[6px] h-[6px] ml-[2px] bg-white border border-t-[#777] border-l-[#777] border-r-[#ccc] border-b-[#ccc]" />, ''];
  }
  if (race) {
    if (id === 'D') return [race[0], clsx('text-center', race[0] === 'D' ? 'text-[#974706]' : 'text-[#00863a] font-bold')];
    if (id === 'E') return [race[1], 'pl-px'];
    if (id === 'F') return [race[2], 'pl-px'];
  }
  if (!horse) return ['', ''];
  const heatIndex = 'MNOPQRS'.indexOf(id);
  if (id.length === 1 && heatIndex >= 0) return [horse.heat[heatIndex][0], clsx('text-right pr-px border-none', horse.heat[heatIndex][1])];
  const spdIndex = ['AL', 'AM', 'AN', 'AO', 'AP', 'AQ', 'AR', 'AS', 'AT', 'AU'].indexOf(id);
  if (spdIndex >= 0) return [horse.spd[spdIndex], 'text-right pr-px text-white'];
  switch (id) {
    case 'H': return [horse.style, 'text-center font-bold text-[#00d232]'];
    case 'I': return [row - 2, clsx('text-right pr-px', horse.hot && 'text-red-600 font-bold')];
    case 'J': return [horse.name, clsx('pl-px', horse.top && 'text-white font-bold italic')];
    case 'L': return [horse.ml, clsx('text-center', horse.top && 'text-red-600 font-bold')];
    case 'T': return [horse.odds, 'text-center text-[#e0d61c]'];
    case 'U': return [horse.cv[0], clsx('text-right pr-px', horse.cv[1])];
    case 'AC': return [horse.fit[0] ? <Mark kind="tick" /> : '', ''];
    case 'AD': return [horse.fit[1] ? <Mark kind="tick" /> : '', ''];
    case 'AE': return [<Mark kind={horse.dst ? 'ok' : 'bad'} />, ''];
    case 'AF': return [<Mark kind="ok" />, ''];
    case 'AG': return [horse.cls ? <Mark kind="club" /> : '', ''];
    case 'AH': return [horse.jky, clsx('text-center', isBlue(horse.jky) && 'text-blue-700')];
    case 'AI': return [horse.trn, 'text-center text-blue-700'];
    case 'AJ': return [horse.bppr, clsx('text-right pr-[2px]', horse.bppr === '161' && 'text-blue-700')];
    case 'AK': return [horse.dslr, clsx('text-right pr-px', Number(horse.dslr) > 60 && 'text-red-700 font-bold')];
    case 'AV': return [horse.e1[0], 'text-right pr-[2px] text-white'];
    case 'AW': return [horse.e1[1], 'text-right pr-[2px] text-white'];
    default: return ['', ''];
  }
}

function DataGrid() {
  const rows = Array.from({ length: 20 }, (_, i) => i + 3);
  return (
    <div className="relative">
      <table className="w-full table-fixed border-separate border-spacing-0 font-['Lato',sans-serif] text-[7px] leading-[8px] text-black">
        <colgroup>
          {COLUMNS.map((c) => <col key={c.id} style={{ width: `${(c.w / 926) * 100}%` }} />)}
        </colgroup>
        <thead>
          <tr className="h-[11px] font-['Open_Sans',sans-serif]">
            {COLUMNS.map((c) => (
              <th
                key={c.id}
                className={clsx('p-0 pt-px overflow-hidden font-normal border-r border-r-[#c0c0c0] border-b', c.id === 'AU' ? 'bg-[#d2d2d2] text-[#217346] border-b-[#217346]' : 'bg-[#e6e6e6] text-[#444] border-b-[#b5b5b5]')}
              >
                {c.id === 'AX' ? 'A' : c.id}
              </th>
            ))}
          </tr>
        </thead>
        <tbody>
          <tr className="h-[9px] bg-[#595959] text-white whitespace-nowrap">
            <td colSpan={5} className="p-0" />
            <td colSpan={4} className="p-0">Currently viewing: SAR 20240801 Race 9</td>
            <td colSpan={2} className="p-0 pl-px">INTEGRITY:</td>
            <td className="p-0 bg-white text-black font-bold text-center">0.71</td>
            <td colSpan={8} className="p-0" />
            <td colSpan={2} className="p-0">
              <label className="flex items-center gap-[2px] bg-[#10b010] text-black pl-[3px] mr-[3px] h-2 leading-none">
                <input type="checkbox" className="appearance-none w-[6px] h-[6px] bg-white" />
                Off Turf
              </label>
            </td>
            <td colSpan={18} className="p-0" />
          </tr>
          <tr className="h-[10px] whitespace-nowrap">
            {COLUMNS.map((c) => <td key={c.id} className={clsx('p-0 overflow-hidden', c.head)}>{c.title}</td>)}
          </tr>
          {rows.map((n) => (
            <tr key={n} className={clsx('whitespace-nowrap', rowHeight(n))}>
              {COLUMNS.map((c) => {
                const [content, extra] = cellFor(c.id, n, RACES[n - 3], HORSES[n - 3]);
                const base = extra.includes('bg-') ? c.body.replace(/bg-\[#[0-9a-f]+\]/, '') : c.body;
                return <td key={c.id} className={clsx('p-0 overflow-hidden', base, extra)}>{content}</td>;
              })}
            </tr>
          ))}
        </tbody>
      </table>
      {/* hand-drawn markers round the two picks */}
      <svg viewBox="0 0 926 227" preserveAspectRatio="none" className="absolute inset-0 w-full h-full pointer-events-none" fill="none" stroke="#fff000" strokeWidth="1.500">
        <path d="M131 61.500q-4 4-1 9.500l30 1h310q18 0 19-2l1-6-6-2H450L410 61H160z" />
        <path d="M134 92q-2 5 0 10l30 1 140 .5h163l22-1 1-8-6-2-40-.7H160z" />
      </svg>
    </div>
  );
}

const TITLE = "font-['Lato',sans-serif] text-[11px] font-bold";
const AXIS = "font-['Lato',sans-serif] text-[6px]";
const CATEGORY = "font-['Lato',sans-serif] text-[5px] font-bold";

function BarChart({ title, width, x0, x1, bottom, max, step, data, fill, bg, barH, children }) {
  const ticks = Array.from({ length: max / step + 1 }, (_, i) => i * step);
  const px = (v) => x0 + ((x1 - x0) * v) / max;
  const top = 36;
  const pitch = (bottom - top) / data.length;
  return (
    <svg viewBox={`0 0 ${width} 210`} className="w-full h-[210px] block" role="img" aria-label={title}>
      <rect width={width} height="210" fill={bg} />
      <rect x={x0} y={top} width={x1 - x0} height={bottom - top} fill="#fff" />
      <text x={width / 2} y="16" textAnchor="middle" className={TITLE}>{title}</text>
      {ticks.map((t) => (
        <g key={t}>
          <path d={`M${px(t)} ${top - 2}V${bottom}`} stroke="#b3b3b3" />
          <text x={px(t)} y="30" textAnchor="middle" className={AXIS}>{t}%</text>
        </g>
      ))}
      <path d={`M${x0} ${top}H${x1}`} stroke="#b3b3b3" />
      {data.map(([name, v], i) => {
        const cy = top + pitch * (i + 0.5);
        return (
          <g key={name}>
            <path d={`M${x0 - 3} ${top + pitch * (i + 1)}h3`} stroke="#999" />
            <text x={x0 - 5} y={cy + 2} textAnchor="end" className={CATEGORY}>{name}</text>
            {v > 0 && <rect x={x0} y={cy + 3 - barH / 2} width={px(v) - x0} height={barH} fill={fill} />}
          </g>
        );
      })}
      {children}
      <path d={`M0 .5H${width}M0 209H${width}`} stroke="#000" strokeWidth="2" />
    </svg>
  );
}

function RadarMap() {
  const px = (v) => 22 + v * 22.4;
  const py = (v) => 194 - (v * 166) / 30;
  return (
    <svg viewBox="0 0 258 210" className="w-full h-[210px] block" role="img" aria-label="Radar Map (TOP vs. CV)">
      <defs>
        <linearGradient id="radarBg" x2="0" y2="1"><stop stopColor="#b5dde6" /><stop offset="1" stopColor="#e3ebf7" /></linearGradient>
        <linearGradient id="radarPlot" x2="0" y2="1"><stop stopColor="#f2f9fb" /><stop offset="1" stopColor="#fbfcff" /></linearGradient>
      </defs>
      <rect width="258" height="210" fill="url(#radarBg)" />
      <rect x="22" y="28" width="224" height="166" fill="url(#radarPlot)" />
      <text x="130" y="16" textAnchor="middle" className={TITLE}>Radar Map (TOP vs. CV)</text>
      {[0, 5, 10, 15, 20, 25, 30].map((t) => (
        <g key={t}>
          <path d={`M22 ${py(t)}H246`} stroke="#b5b5b5" />
          <text x="17" y={py(t) + 2} textAnchor="end" className={AXIS}>{t}%</text>
        </g>
      ))}
      {[0, 2, 4, 6, 8, 10].map((t) => (
        <g key={t}>
          <path d={`M${px(t)} 28V194`} stroke="#b5b5b5" />
          <text x={px(t)} y="204" textAnchor="middle" className={AXIS}>{t}%</text>
        </g>
      ))}
      {RADAR.map(([n, x, y]) => (
        <g key={n}>
          <rect x={px(x) - 2} y={py(y) - 2} width="4" height="4" fill="#c9403c" />
          {(n === 1 || n === 5) && <path d={`M${px(x)} ${py(y) + 0.5}h6`} stroke="#333" strokeWidth=".7" />}
          <text x={px(x) + (n === 5 ? 6 : n === 1 ? 9 : 7)} y={py(y) + 3} className="font-['Lato',sans-serif] text-[7px]">{n}</text>
        </g>
      ))}
      <path d="M0 .5H258M0 209H258" stroke="#000" strokeWidth="2" />
      <path d="M257.500 0V210" stroke="#000" />
    </svg>
  );
}

function Sheet() {
  return (
    <main className="flex bg-[#595959]">
      <RowNumbers />
      <SidePanel />
      <div className="flex-1 min-w-0">
        <DataGrid />
        <div className="flex items-start h-[10px] font-['Lato',sans-serif] text-[6px] leading-[9px] whitespace-nowrap">
          <p className="w-[133px] h-[10px] bg-black text-[#d8ae20] pl-[2px]">
            Pro-Handicap Wizard 4.3 <span className="text-[#00d232]">Turf</span> ® 2017-2024
          </p>
          <label className="ml-[13px] mt-[2px] w-[72px] h-[10px] bg-[#bfbfbf] flex items-center gap-[3px] pl-[2px]">
            <input type="checkbox" className="appearance-none w-[6px] h-[6px] bg-white border border-[#888]" />
            Save Scratch Data
          </label>
          <button aria-label="Clear scratches" className="ml-[25px] mt-px"><Mark kind="bad" /></button>
        </div>
        <div className="flex pt-[13px] pl-[39px]">
          <div className="flex-1 grid grid-cols-[271fr_268fr_258fr] border-l border-black">
            <BarChart title="Win Probability" width={271} x0={69} x1={258} bottom={203} max={30} step={5} data={WIN} fill="#c00000" bg="#d9d9d9" barH={7}>
              <g fill="none" stroke="#fff000" strokeWidth="1.600">
                <path d="M16 45q-4 7 0 13 6 4 30 4h150l48-1q8 0 9-4l1-9q-2-4-22-4L60 43q-38 0-44 2z" />
                <path d="M22 114q-2 5 0 9l14 4 70 .5 36-2q8-1 8-4v-5q-2-3-10-3l-80-1q-34 0-38 1.500z" />
              </g>
            </BarChart>
            <div className="border-l border-black">
              <BarChart title="Probability to First Call" width={267} x0={74} x1={227} bottom={195} max={50} step={10} data={FIRST_CALL} fill="#0070c0" bg="#c6d5ef" barH={6} />
            </div>
            <div className="border-l border-black"><RadarMap /></div>
          </div>
          <div className="w-[90px] pl-[20px] pt-4">
            <div className="relative w-[22px] h-[11px] border border-[#217346] p-px">
              <span className="block w-full h-full border border-[#d8d8d8]" />
              <span className="absolute -right-[2px] -bottom-[2px] w-[4px] h-[4px] bg-[#1e8a4c]" />
            </div>
          </div>
        </div>
      </div>
      <div className="w-[13px] shrink-0 bg-[#dadada] border-l border-[#c4c4c4] flex flex-col items-center pt-[3px]">
        <button aria-label="Scroll up" className="w-[9px] h-[9px] bg-white border border-[#bbb] flex items-center justify-center"><svg viewBox="0 0 4 3" className="w-1 h-[3px]"><path d="M0 3h4L2 0z" fill="#666" /></svg></button>
        <span className="w-[9px] h-[70px] bg-white border border-[#bbb] mt-px" />
        <button aria-label="Scroll down" className="mt-auto w-[9px] h-[9px] bg-white border border-[#bbb] flex items-center justify-center"><svg viewBox="0 0 4 3" className="w-1 h-[3px]"><path d="M0 0h4L2 3z" fill="#666" /></svg></button>
      </div>
    </main>
  );
}

function SheetTabs() {
  return (
    <div className="h-[17px] bg-[#e6e6e6] flex items-center text-[7px] text-[#555] whitespace-nowrap pr-[13px] border-b border-[#cfcfcf]">
      <span className="w-[61px] flex gap-[13px] pl-4 text-[#aaa]"><span>‹</span><span>›</span></span>
      <div className="flex items-center gap-[2px] font-bold text-center">
        <button className="w-[35px] h-[14px] bg-linear-to-b from-white to-[#b9dccb] text-[#217346] border-b-2 border-[#217346] text-[8px] leading-none underline">MAIN</button>
        <button className="w-[51px] h-[14px] bg-black text-white">Combined</button>
        <button className="w-[90px] h-[14px] font-normal">Winning Percentage</button>
        <button className="w-[27px] h-[14px] bg-[#00b050] text-[#06240f] font-normal">Live</button>
        <button className="w-[27px] h-[14px] font-normal">ROI</button>
        <button className="w-[49px] h-[14px] bg-[#8064a2] text-white font-normal">PrintPage</button>
        <button className="w-[60px] h-[14px] bg-[#ffff00] text-black">UserSettings</button>
        <button className="w-[57px] h-[14px] bg-[#ffc000] text-[#3d2b00]">Registration</button>
      </div>
      <button aria-label="New sheet" className="ml-[21px]">
        <svg viewBox="0 0 10 10" className="w-[10px] h-[10px]" fill="none" stroke="#bbb" strokeWidth=".8"><circle cx="5" cy="5" r="4.500" /><path d="M5 2.500v5M2.500 5h5" /></svg>
      </button>
      <span className="ml-auto mr-2 flex flex-col gap-[2px]"><span className="w-px h-px bg-[#888]" /><span className="w-px h-px bg-[#888]" /><span className="w-px h-px bg-[#888]" /></span>
      <div className="w-[95px] h-[9px] bg-[#d6d6d6] flex">
        <button aria-label="Scroll left" className="w-[9px] bg-white border border-[#bbb] flex items-center justify-center"><svg viewBox="0 0 3 4" className="w-[3px] h-1"><path d="M3 0v4L0 2z" fill="#555" /></svg></button>
        <span className="w-[26px] bg-white border border-[#bbb]" />
        <button aria-label="Scroll right" className="ml-auto w-[9px] bg-white border border-[#bbb] flex items-center justify-center"><svg viewBox="0 0 3 4" className="w-[3px] h-1"><path d="M0 0v4l3-2z" fill="#555" /></svg></button>
      </div>
    </div>
  );
}

function StatusBar() {
  return (
    <footer className="h-[14px] bg-[#f1f0f0] flex items-center pl-[5px] pr-[2px] text-[7px] text-[#666]">
      <svg viewBox="0 0 9 8" className="w-[9px] h-2" fill="none" stroke="#555" strokeWidth=".8"><path d="M.5 .5h8v7h-8zM.5 2.500h8M3 2.500v5" /><circle cx="5.500" cy="5" r="1.500" fill="#555" /></svg>
      <div className="ml-auto flex items-center">
        <button aria-label="Normal view" className="w-6 h-[14px] bg-[#cfcfcf] flex items-center justify-center"><svg viewBox="0 0 9 9" className="w-[9px] h-[9px]" fill="none" stroke="#444" strokeWidth=".9"><path d="M.5 .5h8v8h-8zM3.200 .5v8M5.800 .5v8M.5 3.200h8M.5 5.800h8" /></svg></button>
        <button aria-label="Page layout view" className="w-6 flex justify-center"><svg viewBox="0 0 9 9" className="w-[9px] h-[9px]" fill="none" stroke="#555" strokeWidth=".8"><path d="M.5 .5h8v8h-8zM2.500 2h4v5h-4zM3.500 3.500h2M3.500 5h2" /></svg></button>
        <button aria-label="Page break view" className="w-6 flex justify-center"><svg viewBox="0 0 9 9" className="w-[9px] h-[9px]" fill="none" stroke="#555" strokeWidth=".8"><path d="M.5 .5h8v8h-8zM2.500 .5v5h4v-5" /></svg></button>
        <button aria-label="Zoom out" className="w-[15px] flex justify-center"><span className="w-[5px] h-px bg-[#555]" /></button>
        <span className="w-[91px] h-3 bg-[#f7f7fa] border border-[#aaa] rounded-[2px] text-center leading-[10px] whitespace-nowrap">Thursday, August 01, 2024</span>
      </div>
    </footer>
  );
}

function OfficeTile({ letter, back, front }) {
  return (
    <svg viewBox="0 0 20 20" className="w-5 h-5">
      <rect x="6" y="1" width="13" height="18" rx="1.500" fill={back} />
      <path d="M6 6h13M6 10h13M6 14h13" stroke="#fff" strokeOpacity=".3" />
      <rect x="1" y="5" width="11" height="11" rx="1" fill={front} />
      <text x="6.500" y="13.500" textAnchor="middle" fill="#fff" className="font-['Open_Sans',sans-serif] text-[8px] font-bold">{letter}</text>
    </svg>
  );
}

function ChromeIcon({ badge }) {
  return (
    <svg viewBox="0 0 20 20" className="w-5 h-5">
      <circle cx="10" cy="10" r="9" fill="#fbc116" />
      <path d="M2.200 5.500A9 9 0 0010 19l4-7-4-2z" fill="#269a46" /><path d="M2.200 5.500A9 9 0 0117.800 5.500H10z" fill="#e33b2e" />
      <circle cx="10" cy="10" r="4.300" fill="#fff" /><circle cx="10" cy="10" r="3.400" fill="#3a7de8" />
      {badge && <><circle cx="15" cy="15" r="4" fill="#7a4a24" /><circle cx="15" cy="14" r="1.800" fill="#e0b080" /></>}
    </svg>
  );
}

const TASKS = [
  { name: 'Start', icon: <svg viewBox="0 0 22 22" className="w-[22px] h-[22px]"><circle cx="11" cy="11" r="10.500" fill="#1d5c94" stroke="#7fb8dc" /><circle cx="11" cy="8" r="7" fill="#4d9acb" opacity=".5" /><path d="M5 6q3-2 5.500-.5v5Q8 9 5 10.500z" fill="#e8592b" /><path d="M11.500 6q3 1.500 6-.5v5q-3 2-6 .5z" fill="#7dbb2f" /><path d="M5 11.500q3-1.500 5.500 0v5Q8 15 5 16.500z" fill="#3f9be8" /><path d="M11.500 12q3 1.500 6-.5v5q-3 2-6 .5z" fill="#fbc42d" /></svg> },
  { name: 'Internet Explorer', icon: <svg viewBox="0 0 20 20" className="w-5 h-5" fill="none"><path d="M15.500 14A6 6 0 1116 10.500H5" stroke="#5cc4f4" strokeWidth="3.400" /><path d="M2.500 17.500C-1 13 12-1 18 2q2 2-1 5" stroke="#f4c542" strokeWidth="1.500" /></svg> },
  { name: 'Tor Browser', icon: <svg viewBox="0 0 20 20" className="w-5 h-5" fill="none"><circle cx="10" cy="10" r="9" fill="#6d2bb0" /><path d="M10 3a7 7 0 010 14M10 6a4 4 0 010 8" stroke="#d9b8ff" strokeWidth="1.400" /><circle cx="10" cy="10" r="6" stroke="#b77bf0" /></svg> },
  { name: 'PowerPoint', icon: <svg viewBox="0 0 20 20" className="w-5 h-5"><circle cx="11" cy="10" r="8.500" fill="#e86a45" /><path d="M11 1.500a8.500 8.500 0 018.500 8.500H11z" fill="#f79a78" /><rect x="1" y="5" width="11" height="11" rx="1" fill="#c43e1c" /><text x="6.500" y="13.500" textAnchor="middle" fill="#fff" className="font-['Open_Sans',sans-serif] text-[8px] font-bold">P</text></svg> },
  { name: 'Vivaldi', icon: <svg viewBox="0 0 20 20" className="w-5 h-5" fill="none"><rect x="1" y="1" width="18" height="18" rx="7" fill="#ef3939" /><circle cx="10" cy="10" r="7" fill="#fff" /><path d="M6.500 7.500L10 13.500l3.500-6" stroke="#ef3939" strokeWidth="2.400" strokeLinecap="round" strokeLinejoin="round" /></svg> },
  { name: 'Outlook', icon: <OfficeTile letter="O" back="#28a8ea" front="#0f66b8" /> },
  { name: 'OneNote', icon: <OfficeTile letter="N" back="#b45fd0" front="#7719aa" /> },
  { name: 'Explorer', active: true, icon: <svg viewBox="0 0 20 20" className="w-5 h-5"><path d="M2 2h6l2 2h8v14H2z" fill="#d9b24c" /><path d="M4 5h11v8H4z" fill="#fff" /><path d="M2 8h16v10H2z" fill="#f5dc84" /><path d="M5 13h10v5H5z" fill="#7db9e6" /><path d="M7 15h6v3H7z" fill="#f5dc84" /></svg> },
  { name: 'Media Player', icon: <svg viewBox="0 0 20 20" className="w-5 h-5"><rect x="3" y="2" width="13" height="16" rx="1" fill="#b9d7ee" /><circle cx="11" cy="10" r="6" fill="#ef7d1a" stroke="#fff" /><path d="M9 7l5 3-5 3z" fill="#fff" /></svg> },
  { name: 'Chrome profile', active: true, icon: <ChromeIcon badge /> },
  { name: 'Word', active: true, icon: <OfficeTile letter="W" back="#41a5ee" front="#185abd" /> },
  { name: 'Excel', active: true, icon: <OfficeTile letter="X" back="#21a366" front="#107c41" /> },
  { name: 'Chrome', icon: <ChromeIcon /> },
  { name: 'WinRAR', active: true, icon: <svg viewBox="0 0 20 20" className="w-5 h-5"><path d="M1 2h18v5H1z" fill="#b3283c" /><path d="M1 7h18v5H1z" fill="#3a5fc0" /><path d="M1 12h18v6H1z" fill="#3a9a3c" /><path d="M8 1h4v18H8z" fill="#c9a25a" /><path d="M7 8h6v4H7z" fill="#f2d67a" stroke="#5a3d10" strokeWidth=".7" /></svg> },
  { name: 'Handicapper', active: true, icon: <svg viewBox="0 0 20 20" className="w-5 h-5"><path d="M0 0h20v20H0z" fill="#fff" /><path d="M3 1l4 1 3 4 6 3 3 5-3 2-4-2 2 5h-3l-3-5-3-2-1 5-3 2 1-8-1-5z" fill="#1b1b1b" /><path d="M8 4l3-2 2 3-2 2z" fill="#444" /><path d="M10 11l4 2-2 3-3-2z" fill="#c0392b" /></svg> },
];

function Taskbar() {
  return (
    <div className="relative h-6 overflow-hidden bg-[#2c3238] text-white">
      <svg className="absolute inset-0 w-full h-full" aria-hidden="true">
        <filter id="rocks" x="0" y="0" width="100%" height="100%" colorInterpolationFilters="sRGB">
          <feTurbulence type="fractalNoise" baseFrequency=".05 .07" numOctaves="2" seed="8" />
          <feColorMatrix values=".8 .2 0 0 -.22  .75 .25 0 0 -.21  .65 .25 .1 0 -.19  0 0 0 0 1" />
        </filter>
        <linearGradient id="shade"><stop stopColor="#1c3040" stopOpacity=".35" /><stop offset=".5" stopOpacity="0" /><stop offset=".85" stopOpacity=".1" /><stop offset="1" stopOpacity=".45" /></linearGradient>
        <rect width="100%" height="100%" filter="url(#rocks)" />
        <rect width="100%" height="100%" fill="url(#shade)" />
        <rect width="100%" height="1" fill="#8a9298" />
      </svg>
      <div className="relative flex items-center h-full pr-[17px]">
        {TASKS.map((t) => (
          <button
            key={t.name}
            aria-label={t.name}
            className={clsx('h-6 flex items-center justify-center', t.name === 'Start' ? 'w-[34px]' : 'w-[36px] mr-[2px]', t.active && 'bg-white/35 border border-white/50 rounded-[2px]')}
          >
            {t.icon}
          </button>
        ))}
        <div className="ml-auto flex items-center gap-2">
          <svg viewBox="0 0 5 4" className="w-[5px] h-1"><path d="M0 4h5L2.500 0z" fill="#fff" /></svg>
          <svg viewBox="0 0 10 10" className="w-[10px] h-[10px]"><path d="M1 0v10" stroke="#fff" /><path d="M2 1h6v4H2z" fill="#fff" /><circle cx="7" cy="7" r="2.800" fill="#d02a2a" /><path d="M6 6l2 2M8 6L6 8" stroke="#fff" strokeWidth=".7" /></svg>
          <time className="ml-1 text-[7px] leading-[10px] text-center">5:04 PM<br />8/1/2024</time>
        </div>
      </div>
    </div>
  );
}

export default function App() {
  return (
    <div className="font-['Open_Sans',sans-serif] bg-[#595959] overflow-hidden">
      <TitleBar />
      <MenuTabs />
      <Ribbon />
      <FormulaBar />
      <Sheet />
      <SheetTabs />
      <StatusBar />
      <Taskbar />
    </div>
  );
}
